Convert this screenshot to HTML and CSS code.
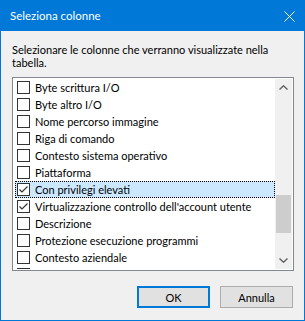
FILE: index.html
```html
<!DOCTYPE html>
<html lang="it">
<head>
  <meta charset="UTF-8" />
  <title>Seleziona colonne</title>
  <link rel="stylesheet" href="styles.css">
</head>
<body>

  <div class="window">
    <div class="titlebar">
      <span class="title">Seleziona colonne</span>
      <svg class="close" width="11" height="11" viewBox="0 0 11 11">
        <path d="M0.5 0.5 L10.5 10.5 M10.5 0.5 L0.5 10.5" stroke="#fff" stroke-width="1" fill="none"/>
      </svg>
    </div>

    <div class="content">
      <p class="prompt">Selezionare le colonne che verranno visualizzate nella<br>tabella.</p>

      <div class="listbox">
        <ul class="items">
          <li class="item"><span class="check"></span>Byte scrittura I/O</li>
          <li class="item"><span class="check"></span>Byte altro I/O</li>
          <li class="item"><span class="check"></span>Nome percorso immagine</li>
          <li class="item"><span class="check"></span>Riga di comando</li>
          <li class="item"><span class="check"></span>Contesto sistema operativo</li>
          <li class="item"><span class="check"></span>Piattaforma</li>
          <li class="item selected"><span class="check checked"><svg width="11" height="11" viewBox="0 0 11 11"><path d="M1.5 5.5 L4 8 L9.5 2.5" stroke="#333" stroke-width="1.2" fill="none"/></svg></span>Con privilegi elevati</li>
          <li class="item"><span class="check checked"><svg width="11" height="11" viewBox="0 0 11 11"><path d="M1.5 5.5 L4 8 L9.5 2.5" stroke="#333" stroke-width="1.2" fill="none"/></svg></span>Virtualizzazione controllo dell'account utente</li>
          <li class="item"><span class="check"></span>Descrizione</li>
          <li class="item"><span class="check"></span>Protezione esecuzione programmi</li>
          <li class="item"><span class="check"></span>Contesto aziendale</li>
          <li class="item"><span class="check"></span></li>
        </ul>
        <div class="scrollbar">
          <div class="arrow">
            <svg width="9" height="5" viewBox="0 0 9 5"><path d="M0.5 4.5 L4.5 0.8 L8.5 4.5" stroke="#606060" stroke-width="1.4" fill="none"/></svg>
          </div>
          <div class="track"><div class="thumb"></div></div>
          <div class="arrow">
            <svg width="9" height="5" viewBox="0 0 9 5"><path d="M0.5 0.5 L4.5 4.2 L8.5 0.5" stroke="#606060" stroke-width="1.4" fill="none"/></svg>
          </div>
        </div>
      </div>

      <div class="buttons">
        <button class="btn default">OK</button>
        <button class="btn">Annulla</button>
      </div>
    </div>
  </div>

</body>
</html>
```

FILE: styles.css
```css
* {
  box-sizing: border-box;
}

html, body {
  margin: 0;
}

body {
  font-family: Lato, "Segoe UI", sans-serif;
  font-size: 11px;
  color: #000;
  background-color: #f0f0f0;
}

.window {
  width: 305px;
  height: 321px;
  border: 1px solid #0078d7;
  background-color: #f0f0f0;
  display: flex;
  flex-direction: column;
}

.titlebar {
  height: 30px;
  background-color: #0078d7;
  color: #fff;
  display: flex;
  align-items: center;
  justify-content: space-between;
  padding: 0 9px;
}

.title {
  font-size: 11.5px;
  line-height: 30px;
}

.close {
  display: block;
}

.content {
  flex: 1;
  display: flex;
  flex-direction: column;
  padding: 12px 10px 0 11px;
}

.prompt {
  margin: 0 0 8px;
  line-height: 13px;
  white-space: nowrap;
}

.listbox {
  height: 194px;
  border: 1px solid #828790;
  background-color: #fff;
  padding: 1px;
  display: flex;
}

.items {
  flex: 1;
  list-style: none;
  margin: 0;
  padding: 0;
  overflow: hidden;
}

.item {
  height: 17px;
  margin-left: 1px;
  display: flex;
  align-items: center;
  white-space: nowrap;
}

.item.selected {
  background-color: #cce8ff;
  outline: 1px dotted #000;
  outline-offset: -1px;
}

.check {
  flex: none;
  width: 13px;
  height: 13px;
  margin: 0 5px 0 2px;
  border: 1px solid #333;
  background-color: #fff;
}

.check svg {
  display: block;
}

.scrollbar {
  width: 17px;
  background-color: #f0f0f0;
  display: flex;
  flex-direction: column;
}

.arrow {
  height: 17px;
  display: flex;
  align-items: center;
  justify-content: center;
}

.track {
  flex: 1;
}

.thumb {
  height: 38px;
  margin: 99px 1px 0;
  background-color: #cdcdcd;
}

.buttons {
  display: flex;
  justify-content: flex-end;
  gap: 10px;
  margin-top: 15px;
  padding-right: 1px;
}

.btn {
  width: 73px;
  height: 22px;
  padding: 0;
  font: inherit;
  color: #000;
  background-color: #e1e1e1;
  border: 1px solid #adadad;
}

.btn.default {
  border: 2px solid #0078d7;
}
```
